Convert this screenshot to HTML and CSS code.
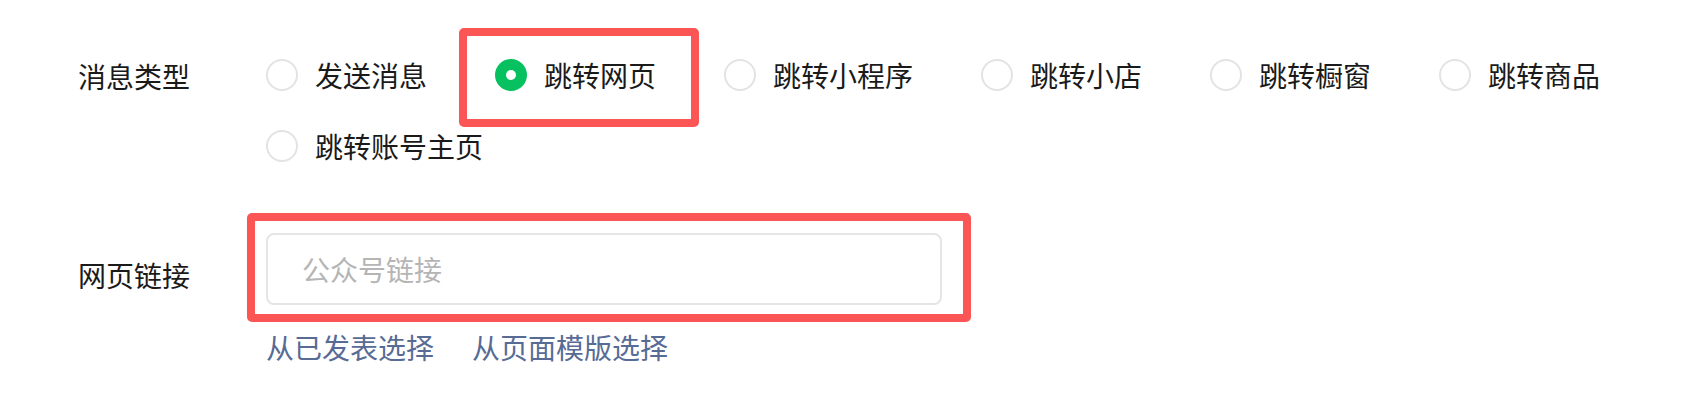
FILE: index.html
```html
<!DOCTYPE html>
<html lang="zh-CN">
<head>
<meta charset="utf-8">
<title>消息类型</title>
<link rel="stylesheet" href="styles.css">
</head>
<body>
<div class="form">
  <div class="row">
    <div class="label">消息类型</div>
    <div class="radios">
      <label class="radio-item"><span class="radio"></span><span class="radio-text">发送消息</span></label>
      <label class="radio-item is-checked"><span class="radio"></span><span class="radio-text">跳转网页</span><span class="mark mark-radio"></span></label>
      <label class="radio-item"><span class="radio"></span><span class="radio-text">跳转小程序</span></label>
      <label class="radio-item"><span class="radio"></span><span class="radio-text">跳转小店</span></label>
      <label class="radio-item"><span class="radio"></span><span class="radio-text">跳转橱窗</span></label>
      <label class="radio-item"><span class="radio"></span><span class="radio-text">跳转商品</span></label>
      <label class="radio-item"><span class="radio"></span><span class="radio-text">跳转账号主页</span></label>
    </div>
  </div>
  <div class="row row-link">
    <div class="label label-link">网页链接</div>
    <div class="field">
      <div class="input-wrap">
        <input class="input" type="text" placeholder="公众号链接">
        <span class="mark mark-input"></span>
      </div>
      <div class="links">
        <a class="link" href="#">从已发表选择</a>
        <a class="link" href="#">从页面模版选择</a>
      </div>
    </div>
  </div>
</div>
</body>
</html>
```

FILE: styles.css
```css
html, body {
  margin: 0;
  padding: 0;
  background: #ffffff;
}

body {
  font-family: "Noto Sans CJK SC", "Noto Sans", sans-serif;
  font-size: 28px;
  color: #1a1a1a;
}

.form {
  padding: 55px 0 0 78px;
}

.row {
  display: flex;
  align-items: flex-start;
}

.label {
  width: 188px;
  flex: none;
  line-height: 40px;
  padding-top: 1px;
  color: #1a1a1a;
}

.radios {
  flex: 1;
  display: flex;
  flex-wrap: wrap;
  column-gap: 68px;
  row-gap: 31px;
}

.radio-item {
  position: relative;
  display: flex;
  align-items: center;
  height: 40px;
  line-height: 40px;
  gap: 17px;
  cursor: pointer;
}

.radio {
  position: relative;
  width: 32px;
  height: 32px;
  box-sizing: border-box;
  border: 2px solid #e3e3e3;
  border-radius: 50%;
  background: #fff;
  flex: none;
}

.is-checked .radio {
  border-color: #07c160;
  background: #07c160;
}

.is-checked .radio::after {
  content: "";
  position: absolute;
  left: 50%;
  top: 50%;
  width: 10px;
  height: 10px;
  margin: -5px 0 0 -5px;
  border-radius: 50%;
  background: #fff;
}

.radio-text {
  white-space: nowrap;
}

.mark {
  position: absolute;
  border: 8px solid #fc5555;
  border-radius: 5px;
  pointer-events: none;
}

.mark-radio {
  top: -27px;
  left: -36px;
  right: -43px;
  bottom: -32px;
}

.row-link {
  margin-top: 67px;
}

.label-link {
  padding-top: 22px;
}

.field {
  display: flex;
  flex-direction: column;
}

.input-wrap {
  position: relative;
  width: 676px;
}

.input {
  display: block;
  width: 100%;
  height: 72px;
  box-sizing: border-box;
  border: 2px solid #e5e5e5;
  border-radius: 8px;
  padding: 0 32px 0 34px;
  font-family: inherit;
  font-size: 28px;
  color: #1a1a1a;
  outline: none;
  background: #fff;
}

.input::placeholder {
  color: #b5b5b5;
}

.mark-input {
  top: -20px;
  left: -19px;
  right: -29px;
  bottom: -17px;
}

.links {
  display: flex;
  gap: 38px;
  margin-top: 22px;
  line-height: 40px;
}

.link {
  color: #576b95;
  text-decoration: none;
}
```
